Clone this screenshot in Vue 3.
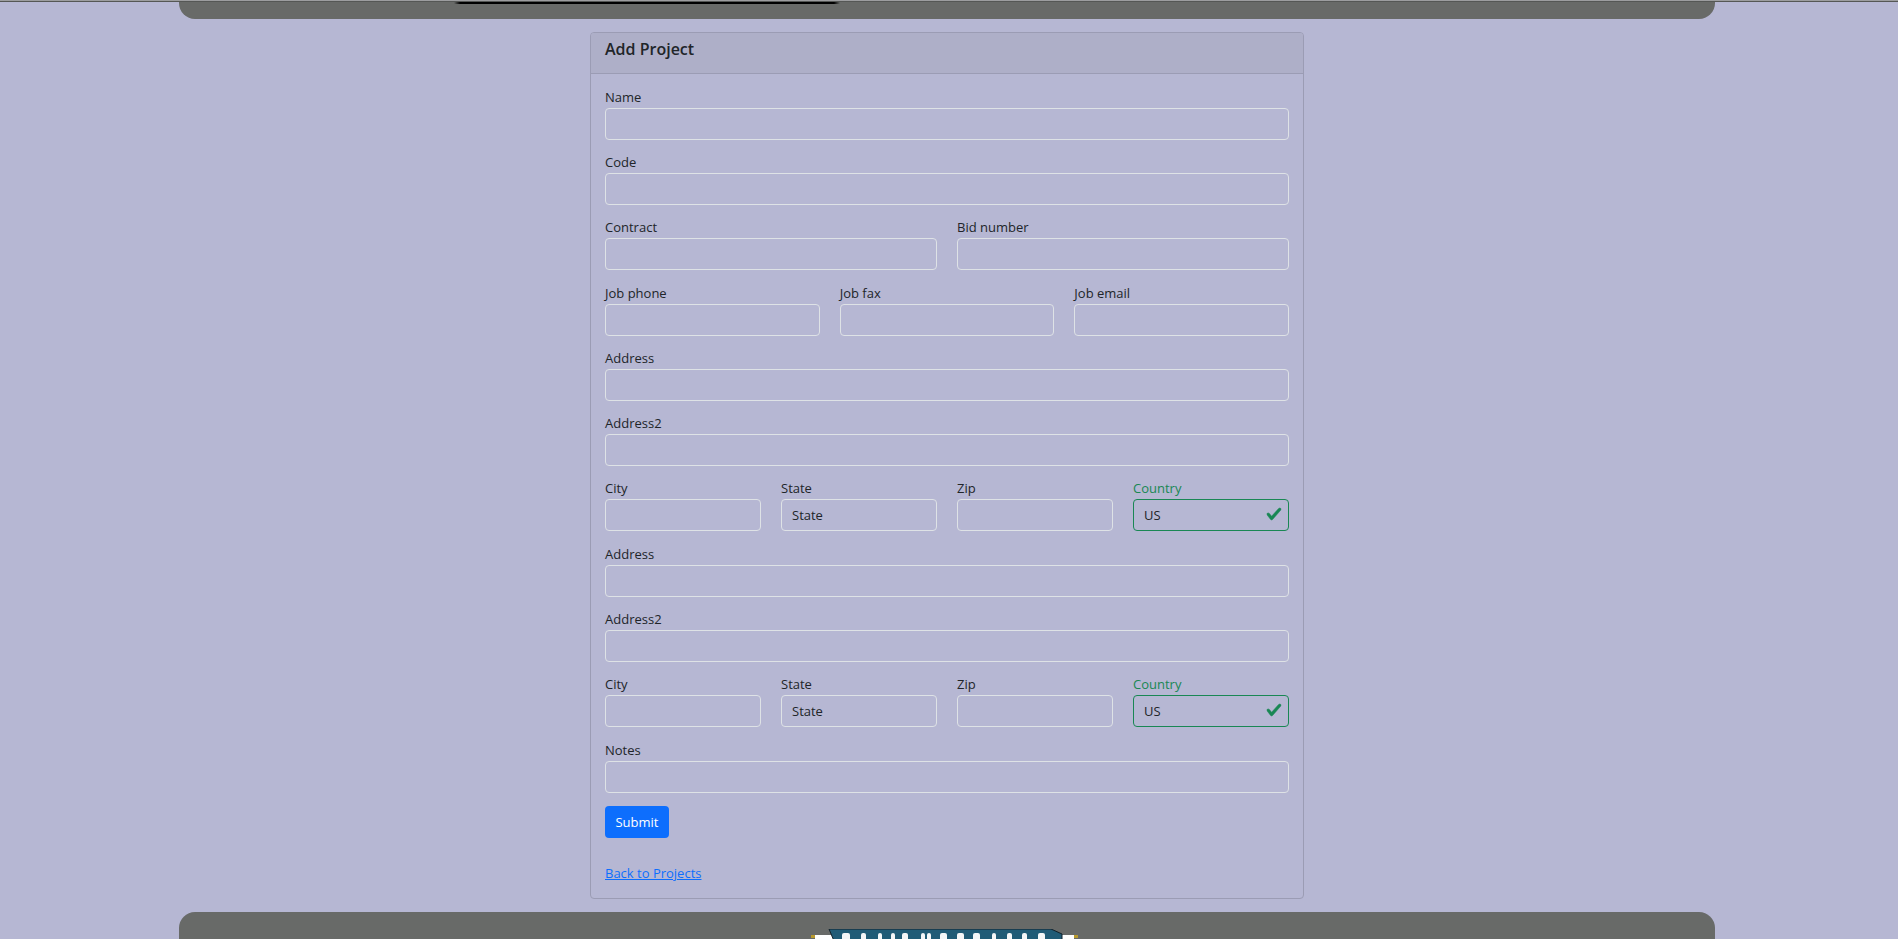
<script setup>
const addressBlock = ['a', 'b']
// tops of the cropped logo lettering: [x, width]
const logoMarks = [
  [12, 8], [31, 5], [48, 4], [61, 4], [72, 6], [91, 4], [97, 4], [110, 7],
  [127, 7], [143, 7], [162, 4], [177, 5], [192, 5], [208, 7]
]
</script>

<template>
  <div class="page">
    <div class="top-line"></div>
    <header class="bar top-bar">
      <div class="top-logo-edge"></div>
    </header>

    <main class="card">
      <div class="card-header">Add Project</div>
      <form class="card-body" @submit.prevent>
        <div class="field">
          <label>Name</label>
          <input type="text" />
        </div>
        <div class="field">
          <label>Code</label>
          <input type="text" />
        </div>
        <div class="row">
          <div class="field"><label>Contract</label><input type="text" /></div>
          <div class="field"><label>Bid number</label><input type="text" /></div>
        </div>
        <div class="row">
          <div class="field"><label>Job phone</label><input type="text" /></div>
          <div class="field"><label>Job fax</label><input type="text" /></div>
          <div class="field"><label>Job email</label><input type="text" /></div>
        </div>

        <template v-for="block in addressBlock" :key="block">
          <div class="field">
            <label>Address</label>
            <input type="text" />
          </div>
          <div class="field">
            <label>Address2</label>
            <input type="text" />
          </div>
          <div class="row">
            <div class="field"><label>City</label><input type="text" /></div>
            <div class="field"><label>State</label><input type="text" placeholder="State" /></div>
            <div class="field"><label>Zip</label><input type="text" /></div>
            <div class="field valid">
              <label>Country</label>
              <div class="valid-input">
                <input type="text" value="US" />
                <svg class="check" viewBox="0 0 8 8" width="16" height="16">
                  <path fill="#198754" stroke="#198754" stroke-width=".25" d="M2.3 6.73.6 4.53c-.4-1.04.46-1.4 1.1-.8l1.1 1.4 3.4-3.8c.6-.63 1.6-.27 1.2.7l-4 4.6c-.43.5-.8.4-1.1.1z" />
                </svg>
              </div>
            </div>
          </div>
        </template>

        <div class="field">
          <label>Notes</label>
          <input type="text" />
        </div>
        <button class="submit" type="submit">Submit</button>
        <a class="back" href="#">Back to Projects</a>
      </form>
    </main>

    <footer class="bar bottom-bar">
      <div class="logo">
        <svg viewBox="0 0 270 12" width="270" height="12">
          <rect x="0" y="6" width="5" height="3" fill="#b89a2e" />
          <rect x="263" y="6" width="4" height="3" fill="#b89a2e" />
          <rect x="4" y="6" width="19" height="6" fill="#fff" />
          <rect x="244" y="6" width="19" height="6" fill="#fff" />
          <path d="M18 0 H240 L251 5 V12 H23 Z" fill="#205b76" stroke="#10202a" stroke-width="1" />
          <rect v-for="m in logoMarks" :key="m[0]" :x="m[0] + 19" y="4" :width="m[1]" height="8" rx="2" fill="#f4f6f7" />
        </svg>
      </div>
    </footer>
  </div>
</template>

<style>
html, body { margin: 0; background: #b6b7d3; overflow: hidden; }
</style>

<style scoped>
.page {
  box-sizing: border-box;
  width: 1898px;
  height: 939px;
  padding-right: 3px;
  overflow: hidden;
  background: #b6b7d3;
  font-family: "Open Sans", "Noto Sans", sans-serif;
  font-size: 14px;
  color: #212529;
  display: flex;
  flex-direction: column;
  align-items: center;
}
.top-line {
  flex: none;
  align-self: flex-start;
  width: 1898px;
  height: 2px;
  background: linear-gradient(#9c9d9f 50%, #555755 50%);
}
.bar {
  flex: none;
  width: 1536px;
  margin-right: 1px;
  background: #686a68;
}
.top-bar {
  box-sizing: border-box;
  height: 17px;
  padding-left: 275px;
  border-radius: 0 0 16px 16px;
}
.top-logo-edge {
  width: 386px;
  height: 2px;
  background: linear-gradient(90deg, #686a68, #000 6px, #000 380px, #686a68);
}
.card {
  flex: none;
  box-sizing: border-box;
  width: 714px;
  height: 867px;
  margin: 13px 1px 0 0;
  border: 1px solid #9b9cb4;
  border-radius: 4px;
}
.card-header {
  box-sizing: border-box;
  height: 41px;
  padding: 6px 14px;
  font-size: 16px;
  font-weight: 600;
  line-height: 20px;
  background: #aeafc8;
  border-bottom: 1px solid #9b9cb4;
  border-radius: 3px 3px 0 0;
}
.card-body {
  padding: 13.65px 14px 0;
  display: flex;
  flex-direction: column;
  gap: 13.3px;
}
.row { display: flex; gap: 20px; }
.row .field { flex: 1 1 0; min-width: 0; }
.field { display: flex; flex-direction: column; }
label { font-size: 13px; line-height: 18px; margin-bottom: 2px; }
input {
  box-sizing: border-box;
  width: 100%;
  height: 32px;
  padding: 4px 10px;
  font: inherit;
  font-size: 13px;
  color: #212529;
  background: transparent;
  border: 1px solid #dee2e6;
  border-radius: 4px;
  outline: none;
}
input::placeholder { color: #212529; opacity: 1; }
.valid label { color: #198754; }
.valid input { border-color: #198754; }
.valid-input { position: relative; }
.check { position: absolute; right: 7px; top: 7px; }
.submit {
  align-self: flex-start;
  width: 64px;
  height: 32px;
  padding: 0;
  font: inherit;
  font-size: 13px;
  color: #fff;
  background: #0d6efd;
  border: none;
  border-radius: 4px;
}
.back {
  align-self: flex-start;
  margin-top: 12px;
  font-size: 13px;
  line-height: 20px;
  color: #0d6efd;
}
.bottom-bar {
  height: 60px;
  margin-top: 13px;
  border-radius: 16px 16px 0 0;
  display: flex;
  justify-content: center;
}
.logo { margin: 17px 2px 0 0; height: 12px; }
.logo svg { display: block; }
</style>
